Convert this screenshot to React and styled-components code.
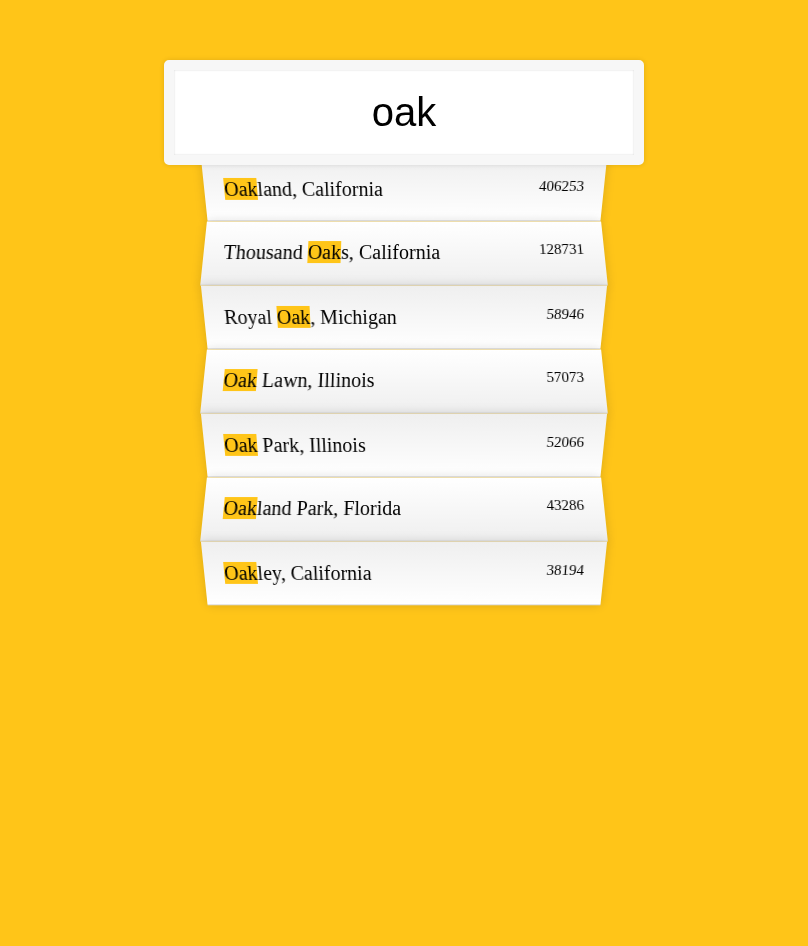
import React from 'react';
import styled, { createGlobalStyle } from 'styled-components';

const GlobalStyle = createGlobalStyle`
  html {
    box-sizing: border-box;
    background: #ffc518;
    font-family: 'Liberation Serif', serif;
    font-size: 20px;
    font-weight: 200;
  }
  body {
    margin: 0;
  }
  *, *:before, *:after {
    box-sizing: inherit;
  }
`;

const SearchForm = styled.form`
  max-width: 400px;
  margin: 50px auto;
`;

const SearchInput = styled.input`
  display: block;
  margin: 0;
  padding: 20px;
  text-align: center;
  outline: 0;
  border: 10px solid #f7f7f7;
  width: 120%;
  left: -10%;
  position: relative;
  top: 10px;
  z-index: 2;
  border-radius: 5px;
  font-family: 'Liberation Sans', Arial, sans-serif;
  font-size: 40px;
  color: #000;
  background: #fff;
  box-shadow: 0 0 5px rgba(0, 0, 0, 0.12), inset 0 0 2px rgba(0, 0, 0, 0.19);
`;

const Suggestions = styled.ul`
  margin: 0;
  padding: 0;
  position: relative;
`;

const Suggestion = styled.li`
  list-style: none;
  border-bottom: 1px solid #d8d8d8;
  box-shadow: 0 0 10px rgba(0, 0, 0, 0.14);
  margin: 0;
  padding: 20px;
  display: flex;
  justify-content: space-between;
  text-transform: capitalize;
  color: #000;

  &:nth-child(even) {
    transform: perspective(100px) rotateX(3deg) translateY(2px) scale(1.001);
    background: linear-gradient(to bottom, #ffffff 0%, #efefef 100%);
  }
  &:nth-child(odd) {
    transform: perspective(100px) rotateX(-3deg) translateY(3px);
    background: linear-gradient(to top, #ffffff 0%, #efefef 100%);
  }
`;

const Highlight = styled.span`
  background: #ffc518;
`;

const Population = styled.span`
  font-size: 15px;
`;

const cities = [
  ['Oakland, California', 406253],
  ['Thousand Oaks, California', 128731],
  ['Royal Oak, Michigan', 58946],
  ['Oak Lawn, Illinois', 57073],
  ['Oak Park, Illinois', 52066],
  ['Oakland Park, Florida', 43286],
  ['Oakley, California', 38194],
];

const query = 'oak';

const highlight = (name) => {
  const i = name.toLowerCase().indexOf(query);
  if (i < 0) return name;
  return (
    <>
      {name.slice(0, i)}
      <Highlight>{name.slice(i, i + query.length)}</Highlight>
      {name.slice(i + query.length)}
    </>
  );
};

export default function App() {
  return (
    <>
      <GlobalStyle />
      <SearchForm onSubmit={(e) => e.preventDefault()}>
        <SearchInput type="text" defaultValue="oak" placeholder="City or State" />
        <Suggestions>
          {cities.map(([name, pop]) => (
            <Suggestion key={name}>
              <span>{highlight(name)}</span>
              <Population>{pop}</Population>
            </Suggestion>
          ))}
        </Suggestions>
      </SearchForm>
    </>
  );
}
